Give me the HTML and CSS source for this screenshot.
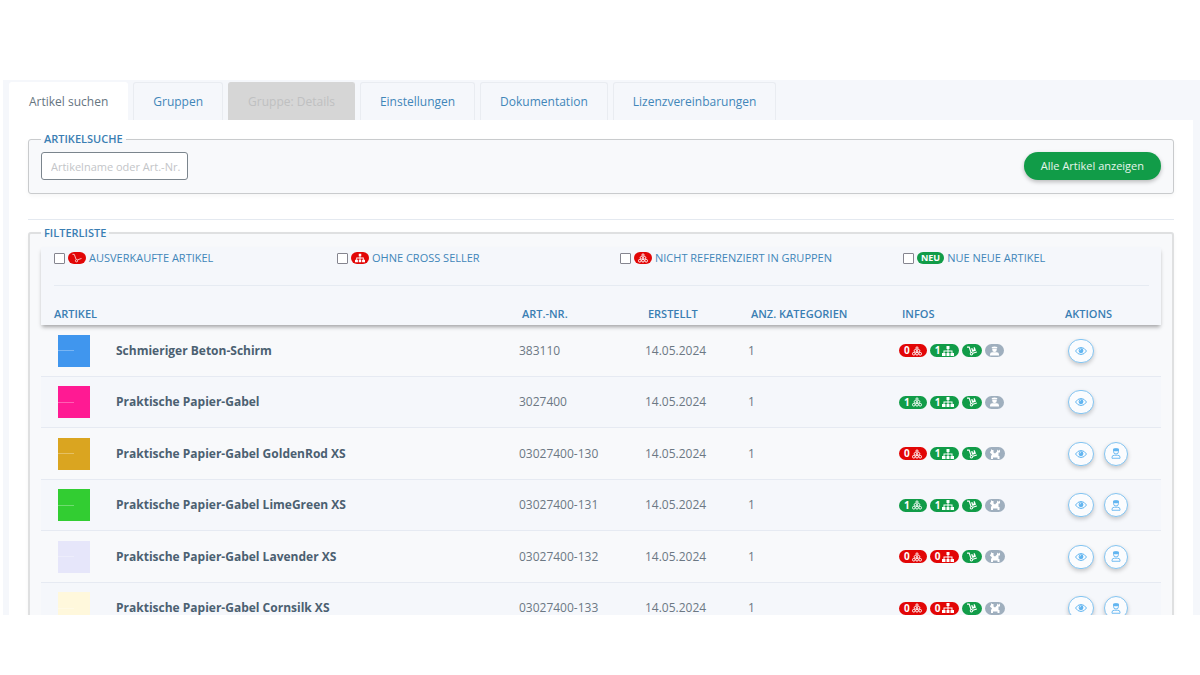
FILE: index.html
```html
<!DOCTYPE html>
<html lang="de">
<head>
<meta charset="utf-8">
<title>Artikel suchen</title>
<link rel="stylesheet" href="styles.css">
</head>
<body>
<svg class="sprite" aria-hidden="true">
  <symbol id="i-site" viewBox="0 0 24 20"><path d="M9 0h6v6h-2v3h8v5h3v6h-7v-6h2v-3h-6v3h2v6H9v-6h2v-3H5v3h2v6H0v-6h3V9h8V6H9z"/></symbol>
  <symbol id="i-group" viewBox="0 0 22 20"><g fill="none" stroke="currentColor" stroke-width="2"><circle cx="11" cy="3.500" r="2.500"/><circle cx="7.500" cy="9.500" r="2.800"/><circle cx="14.500" cy="9.500" r="2.800"/><circle cx="4" cy="16" r="3"/><circle cx="11" cy="16" r="3"/><circle cx="18" cy="16" r="3"/></g></symbol>
  <symbol id="i-dolly" viewBox="0 0 576 512"><path d="M294.2 277.7c18 5 34.7 13.4 49.5 24.7l161.5-53.8c8.4-2.8 12.9-11.9 10.1-20.2L454.9 47.2c-2.8-8.4-11.9-12.9-20.2-10.1l-61.1 20.4 33.1 99.4L346 177l-33.1-99.4-61.6 20.5c-8.4 2.8-12.9 11.9-10.1 20.2l53 159.4zm281 48.7L565 296c-2.8-8.4-11.9-12.9-20.2-10.1l-213.5 71.2c-17.2-22-43.6-36.4-73.5-37L158.4 21.9C154 8.800 141.800 0 128 0H16C7.200 0 0 7.200 0 16v32c0 8.800 7.200 16 16 16h88.900l92.200 276.700c-26.100 20.400-41.700 53.600-36 90.500 6.100 39.400 37.900 72.300 77.300 79.200 60.200 10.700 112.300-34.800 113.400-92.600l213.300-71.200c8.300-2.800 12.900-11.800 10.100-20.200zM256 464c-26.500 0-48-21.500-48-48s21.500-48 48-48 48 21.500 48 48-21.500 48-48 48z"/></symbol>
  <symbol id="i-empty" viewBox="0 0 22 20"><g fill="none" stroke="currentColor" stroke-width="1.600"><path d="M1 2h4l4 11M12 14l9-3"/><circle cx="10" cy="16" r="2.500"/></g></symbol>
  <symbol id="i-person" viewBox="0 0 20 20"><path d="M4 1l6-1 6 1v3H4zM5 5h10v2q0 5-5 5T5 7zM0 18q0-5 5-5h10q5 0 5 5v2H0z"/></symbol>
  <symbol id="i-child" viewBox="0 0 20 20"><path d="M2 0l2 2h3v5l3 2 4-4V1l2 2h2l2-2v6h-3v7h2v6h-4v-3H6v3H2v-6l2-3-4-4V5h2z"/></symbol>
  <symbol id="i-eye" viewBox="0 0 24 16"><path d="M1 8q4.500-7 11-7t11 7q-4.500 7-11 7T1 8z" fill="none" stroke="currentColor" stroke-width="2"/><circle cx="12" cy="7.500" r="4.800"/><path d="M9.500 7q0-2.500 2.500-2.500" fill="none" stroke="#fff" stroke-width="1.200"/></symbol>
  <symbol id="i-staff" viewBox="0 0 20 22"><g fill="none" stroke="currentColor" stroke-width="1.800"><path d="M5 2l5-1 5 1v5q0 5-5 5T5 7zM2 20.500v-2q0-4 4.500-4h7q4.500 0 4.500 4v2z"/></g><path d="M5 1.500h10v5H5z"/></symbol>
</svg>
<main class="app">
  <nav class="tabs">
    <button class="tab active" type="button">Artikel suchen</button>
    <button class="tab" type="button">Gruppen</button>
    <button class="tab" type="button" disabled>Gruppe: Details</button>
    <button class="tab" type="button">Einstellungen</button>
    <button class="tab" type="button">Dokumentation</button>
    <button class="tab" type="button">Lizenzvereinbarungen</button>
  </nav>
  <section class="panel">
    <fieldset class="box">
      <legend>ARTIKELSUCHE</legend>
      <div class="search">
        <input class="query" type="text" aria-label="Artikelsuche" placeholder="Artikelname oder Art.-Nr. eingeben">
        <button class="show-all" type="button">Alle Artikel anzeigen</button>
      </div>
    </fieldset>
    <hr class="rule">
    <fieldset class="box list">
      <legend>FILTERLISTE</legend>
      <table class="articles">
        <colgroup><col><col class="c-nr"><col class="c-date"><col class="c-cat"><col class="c-info"><col class="c-act"></colgroup>
        <thead>
          <tr>
            <td class="filter-cell" colspan="6">
              <div class="filters">
                <label class="filter"><input type="checkbox"><span class="badge red"><svg class="ico"><use href="#i-empty"/></svg></span>AUSVERKAUFTE ARTIKEL</label>
                <label class="filter"><input type="checkbox"><span class="badge red"><svg class="ico"><use href="#i-site"/></svg></span>OHNE CROSS SELLER</label>
                <label class="filter"><input type="checkbox"><span class="badge red"><svg class="ico"><use href="#i-group"/></svg></span>NICHT REFERENZIERT IN GRUPPEN</label>
                <label class="filter"><input type="checkbox"><span class="badge green">NEU</span>NUE NEUE ARTIKEL</label>
              </div>
            </td>
          </tr>
          <tr><th>ARTIKEL</th><th>ART.-NR.</th><th>ERSTELLT</th><th>ANZ. KATEGORIEN</th><th>INFOS</th><th>AKTIONS</th></tr>
        </thead>
        <tbody id="rows"></tbody>
      </table>
    </fieldset>
  </section>
</main>
<script src="app.js"></script>
</body>
</html>
```
FILE: styles.css
```css
* { box-sizing: border-box; }
body {
  margin: 0;
  padding: 80px 0 60px 3px;
  height: 100vh;
  overflow: hidden;
  background: #fff;
  font: 12px/16px "Open Sans", sans-serif;
  color: #6c7884;
}
button, input { font: inherit; }
.sprite { display: none; }
.app {
  height: 100%;
  overflow: hidden;
  padding: 2px 7px 0 6px;
  background: #f5f7fb;
}
.tabs { display: flex; gap: 5px; }
.tab {
  height: 38px;
  padding: 0 19px;
  border: 1px solid #e9ecf1;
  border-bottom: 0;
  border-radius: 3px 3px 0 0;
  background: #f5f7fb;
  color: #4186b9;
}
.tab.active { background: #fff; border-color: #fff; color: #66757f; }
.tab:disabled { background: #d6d6d6; border-color: #d6d6d6; color: #bfc0c1; }
.panel { padding: 12px 19px; background: #fff; }
.box {
  margin: 0;
  padding: 6px 12px 13px;
  min-width: 0;
  border: 1px solid #c9cbcd;
  border-radius: 3px;
  background: #f8f9fb;
  box-shadow: 0 2px 4px rgba(0, 0, 0, .04);
}
.box.list { border: 2px solid #dfe0e1; padding: 7px 11px; }
.box legend {
  padding: 0 3px;
  font-size: 11px;
  line-height: 14px;
  font-weight: 600;
  color: #3a7eb3;
}
.search { display: flex; justify-content: space-between; align-items: center; }
.query {
  width: 147px;
  height: 28px;
  padding: 0 6px 0 9px;
  border: 1px solid #7b858d;
  border-radius: 3px;
  background: #fff;
  font-size: 11px;
}
.query::placeholder { color: #c3c5c8; }
.show-all {
  height: 28px;
  padding: 0 17px;
  border: 0;
  border-radius: 14px;
  background: #119c48;
  color: #e6f5ec;
  font-size: 11px;
  box-shadow: 0 2px 4px rgba(0, 0, 0, .25);
}
.rule { margin: 25px 0 6px; border: 0; border-top: 1px solid #e4e9f0; }
.articles { width: 100%; table-layout: fixed; border-collapse: separate; border-spacing: 0; }
.c-nr { width: 126px; }
.c-date { width: 103px; }
.c-cat { width: 151px; }
.c-info { width: 163px; }
.c-act { width: 109px; }
.articles thead {
  background: #f5f7fb;
  box-shadow: 0 3px 4px -1px rgba(0, 0, 0, .35);
}
.filter-cell { padding: 3px 12px 0 13px; }
.filters {
  display: grid;
  grid-template-columns: repeat(4, 1fr);
  gap: 37px;
  padding-bottom: 19px;
  border-bottom: 1px solid #e6ebf2;
}
.filter {
  display: flex;
  align-items: center;
  gap: 3px;
  font-size: 11px;
  white-space: nowrap;
  color: #4186b9;
}
.filter input {
  appearance: none;
  width: 11px;
  height: 11px;
  margin: 0;
  border: 1px solid #85858f;
  border-radius: 1px;
  background: #fff;
}
.articles th {
  padding: 20px 0 3px 13px;
  text-align: left;
  font-size: 11px;
  font-weight: 600;
  color: #3a7eb3;
  white-space: nowrap;
}
.articles tbody td {
  height: 52px;
  padding: 0 10px;
  border-bottom: 1px solid #e6eaf2;
}
.articles tbody tr:nth-child(even) { background: #f5f7fb; }
.articles tbody tr:nth-child(even) td { height: 51px; }
.articles tbody .article { padding-left: 17px; }
.articles tbody .actions { padding: 0 0 0 16px; }
.name { display: flex; align-items: center; gap: 26px; font-weight: 700; font-size: 12px; color: #4b6071; }
.swatch { width: 32px; height: 32px; display: flex; align-items: center; }
.swatch::before { content: ""; width: 16px; height: 1px; background: rgba(255, 255, 255, .3); }
.badges, .buttons { display: flex; align-items: center; }
.badges { gap: 3px; }
.buttons { gap: 10px; }
.badge {
  display: inline-flex;
  align-items: center;
  gap: 2px;
  height: 13px;
  padding: 0 5px;
  border-radius: 7px;
  color: #fff;
  font-size: 10px;
  line-height: 13px;
  font-weight: 700;
}
.filter .badge { height: 12px; padding: 0 4px; font-size: 9px; line-height: 12px; }
.red { background: #e20606; }
.green { background: #119c48; }
.grey { background: #9fafbe; }
.ico { width: 10px; height: 10px; fill: currentColor; }
.ico.wide { width: 12px; }
.ico.narrow { width: 9px; }
.round {
  display: flex;
  align-items: center;
  justify-content: center;
  width: 26px;
  height: 24px;
  padding: 0;
  border: 1px solid #84c5f2;
  border-radius: 12px;
  background: #fbfcfe;
  color: #62b5f0;
  box-shadow: 0 2px 4px rgba(0, 0, 0, .2);
}
.round.small { width: 24px; }
.eye { width: 12px; height: 8px; fill: currentColor; }
.staff { width: 10px; height: 11px; fill: currentColor; }
```
FILE: app.js
```js
const articles = [
  ["Schmieriger Beton-Schirm", "383110", "#4096ee", 0, 1, true],
  ["Praktische Papier-Gabel", "3027400", "#ff1a93", 1, 1, true],
  ["Praktische Papier-Gabel GoldenRod XS", "03027400-130", "#daa520", 0, 1, false],
  ["Praktische Papier-Gabel LimeGreen XS", "03027400-131", "#32cd32", 1, 1, false],
  ["Praktische Papier-Gabel Lavender XS", "03027400-132", "#e6e6fa", 0, 0, false],
  ["Praktische Papier-Gabel Cornsilk XS", "03027400-133", "#fff8dc", 0, 0, false]
];
const icon = (id, cls) => `<svg class="${cls}" aria-hidden="true"><use href="#${id}"/></svg>`;
const count = (n, id, cls) => `<span class="badge ${n ? "green" : "red"}">${n}${icon(id, cls)}</span>`;
document.getElementById("rows").innerHTML = articles.map(([name, nr, color, groups, cross, parent]) => `
  <tr>
    <td class="article"><div class="name"><span class="swatch" style="background:${color}"></span>${name}</div></td>
    <td>${nr}</td><td>14.05.2024</td><td>1</td>
    <td><div class="badges">${count(groups, "i-group", "ico")}${count(cross, "i-site", "ico wide")}
      <span class="badge green">${icon("i-dolly", "ico")}</span>
      <span class="badge grey">${parent ? icon("i-person", "ico narrow") : icon("i-child", "ico")}</span></div></td>
    <td class="actions"><div class="buttons">
      <button class="round" type="button" aria-label="Ansehen">${icon("i-eye", "eye")}</button>
      ${parent ? "" : `<button class="round small" type="button" aria-label="Hauptartikel">${icon("i-staff", "staff")}</button>`}
    </div></td>
  </tr>`).join("");
```
